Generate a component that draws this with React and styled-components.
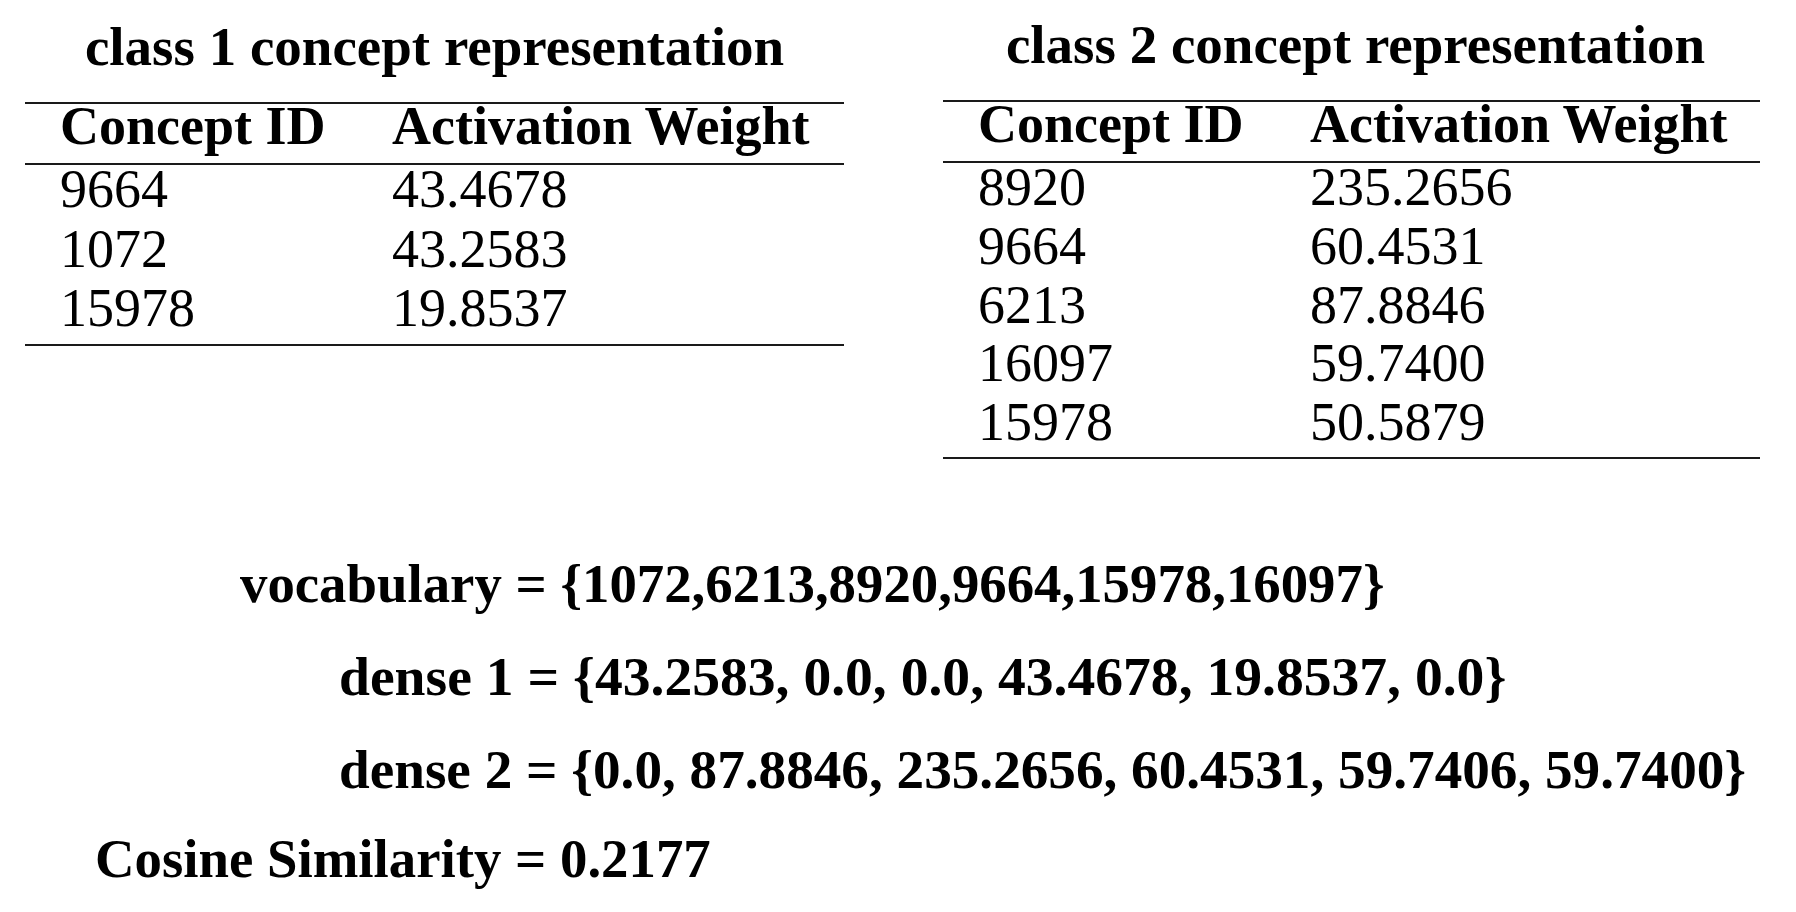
import React from "react";
import styled, { createGlobalStyle } from "styled-components";

const GlobalStyle = createGlobalStyle`
  html, body { margin: 0; padding: 0; background: #ffffff; }
  body {
    font-family: "Liberation Serif", "Times New Roman", serif;
    color: #000000;
  }
  * { box-sizing: border-box; }
`;

const Page = styled.main`
  width: 1796px;
  height: 912px;
  overflow: hidden;
  background: #ffffff;
  display: flex;
  flex-direction: column;
`;

const TopRow = styled.section`
  display: flex;
  align-items: flex-start;
  gap: 99px;
  padding: 17px 0 0 25px;
`;

const Figure = styled.figure`
  margin: ${(p) => p.$offset || 0}px 0 0 0;
  width: ${(p) => p.$width}px;
  display: flex;
  flex-direction: column;
`;

const Caption = styled.figcaption`
  font-weight: 700;
  font-size: 55px;
  line-height: 55px;
  text-align: center;
  white-space: nowrap;
  padding-left: ${(p) => p.$nudge || 0}px;
  margin-bottom: 28px;
`;

const Table = styled.div`
  border-top: 2px solid #1a1a1a;
  border-bottom: 2px solid #1a1a1a;
`;

const HeadRow = styled.div`
  display: grid;
  grid-template-columns: 367px 1fr;
  font-weight: 700;
  font-size: 54px;
  line-height: 45px;
  padding-bottom: 14px;
  border-bottom: 2px solid #1a1a1a;
`;

const BodyRow = styled.div`
  display: grid;
  grid-template-columns: 367px 1fr;
  font-size: 54px;
  line-height: 48px;
  padding-bottom: ${(p) => p.$gap}px;
`;

const Cell = styled.div`
  white-space: nowrap;
  &:first-child {
    padding-left: 35px;
  }
`;

const Formulas = styled.section`
  margin-top: 78px;
  display: flex;
  flex-direction: column;
`;

const Formula = styled.p`
  margin: ${(p) => -(p.$lift || 0)}px 0 0 0;
  padding-left: ${(p) => p.$indent}px;
  font-weight: 700;
  font-size: ${(p) => p.$size || 55}px;
  line-height: 93px;
  white-space: nowrap;
`;

const tables = [
  {
    title: "class 1 concept representation",
    width: 819,
    offset: 2,
    nudge: 0,
    gap: 11.6,
    rows: [
      ["9664", "43.4678"],
      ["1072", "43.2583"],
      ["15978", "19.8537"],
    ],
  },
  {
    title: "class 2 concept representation",
    width: 817,
    offset: 0,
    nudge: 8,
    gap: 10.8,
    rows: [
      ["8920", "235.2656"],
      ["9664", "60.4531"],
      ["6213", "87.8846"],
      ["16097", "59.7400"],
      ["15978", "50.5879"],
    ],
  },
];

const formulas = [
  { text: "vocabulary = {1072,6213,8920,9664,15978,16097}", indent: 240, size: 54.8 },
  { text: "dense 1 = {43.2583, 0.0, 0.0, 43.4678, 19.8537, 0.0}", indent: 339, size: 55.6 },
  { text: "dense 2 = {0.0, 87.8846, 235.2656, 60.4531, 59.7406, 59.7400}", indent: 339, size: 55.2 },
  { text: "Cosine Similarity = 0.2177", indent: 95, lift: 4, size: 54.8 },
];

export default function App() {
  return (
    <>
      <GlobalStyle />
      <Page>
        <TopRow>
          {tables.map((t) => (
            <Figure key={t.title} $width={t.width} $offset={t.offset}>
              <Caption $nudge={t.nudge}>{t.title}</Caption>
              <Table>
                <HeadRow>
                  <Cell>Concept ID</Cell>
                  <Cell>Activation Weight</Cell>
                </HeadRow>
                {t.rows.map(([id, w]) => (
                  <BodyRow key={id} $gap={t.gap}>
                    <Cell>{id}</Cell>
                    <Cell>{w}</Cell>
                  </BodyRow>
                ))}
              </Table>
            </Figure>
          ))}
        </TopRow>
        <Formulas>
          {formulas.map((f) => (
            <Formula key={f.text} $indent={f.indent} $lift={f.lift} $size={f.size}>
              {f.text}
            </Formula>
          ))}
        </Formulas>
      </Page>
    </>
  );
}
